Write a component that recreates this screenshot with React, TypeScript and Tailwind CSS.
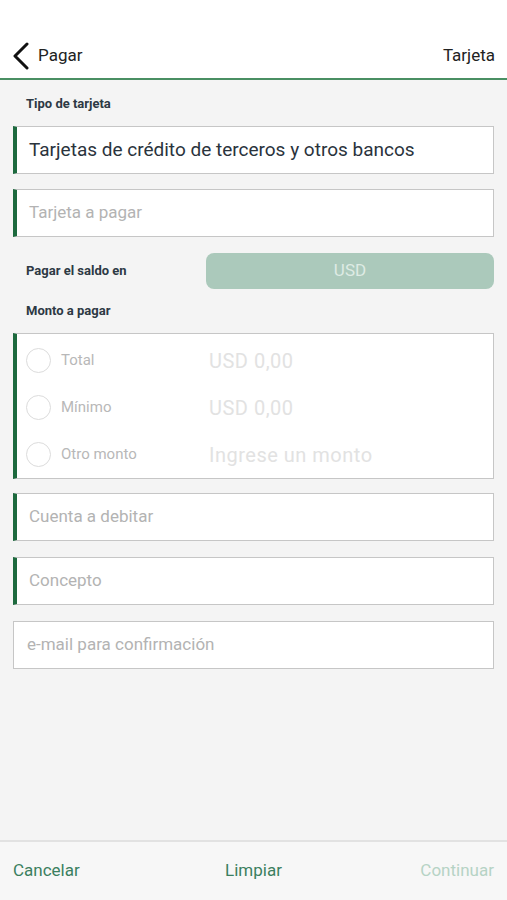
import React from "react";

const font = { fontFamily: "Roboto, 'Noto Sans', sans-serif" };

function Field({ children, bar = true, filled = false }: { children: React.ReactNode; bar?: boolean; filled?: boolean }) {
  return (
    <div
      className={`h-[48px] bg-white border border-[#c6c6c6] flex items-center ${bar ? "border-l-[4px] border-l-[#1d6a3e] pl-[12px]" : "pl-[13px]"} ${filled ? "text-[19px] text-[#2a333c]" : "text-[17px] text-[#b3b3b3]"}`}
    >
      {children}
    </div>
  );
}

function RadioRow({ label, value }: { label: string; value: string }) {
  return (
    <div className="h-[47px] flex items-center">
      <div className="w-[25px] h-[25px] rounded-full border-[1.5px] border-[#dcdcdc] ml-[9px] shrink-0" />
      <div className="ml-[10px] w-[148px] text-[15px] text-[#b8b8b8]">{label}</div>
      <div className="text-[20px] text-[#e2e2e2] tracking-[0.5px]">{value}</div>
    </div>
  );
}

export default function App() {
  return (
    <div className="min-h-[900px] h-[900px] flex flex-col bg-[#f4f4f4]" style={font}>
      <div className="h-[80px] bg-white border-b-2 border-[#4a8f63] flex items-center px-[12px] pt-[34px] shrink-0">
        <svg width="18" height="28" viewBox="0 0 18 28" className="shrink-0">
          <path d="M15 2 L3 14 L15 26" fill="none" stroke="#111" strokeWidth="3" strokeLinecap="round" strokeLinejoin="round" />
        </svg>
        <span className="ml-[8px] text-[17px] text-[#222]">Pagar</span>
        <span className="ml-auto text-[17px] text-[#222]">Tarjeta</span>
      </div>

      <div className="px-[13px] flex flex-col">
        <div className="mt-[16px] ml-[13px] text-[13px] leading-[16px] font-bold text-[#2d3944]">Tipo de tarjeta</div>
        <div className="mt-[14px]">
          <Field filled>Tarjetas de crédito de terceros y otros bancos</Field>
        </div>
        <div className="mt-[15px]">
          <Field>Tarjeta a pagar</Field>
        </div>

        <div className="mt-[16px] flex items-center">
          <div className="ml-[13px] w-[180px] text-[13px] font-bold text-[#2d3944]">Pagar el saldo en</div>
          <div className="flex-1 h-[36px] rounded-[8px] bg-[#abc9bb] flex items-center justify-center text-[17px] text-[#deebe4]">USD</div>
        </div>

        <div className="mt-[14px] ml-[13px] text-[13px] leading-[16px] font-bold text-[#2d3944]">Monto a pagar</div>
        <div className="mt-[14px] bg-white border border-[#c6c6c6] border-l-[4px] border-l-[#1d6a3e] pt-[3px]">
          <RadioRow label="Total" value="USD 0,00" />
          <RadioRow label="Mínimo" value="USD 0,00" />
          <RadioRow label="Otro monto" value="Ingrese un monto" />
        </div>

        <div className="mt-[14px]">
          <Field>Cuenta a debitar</Field>
        </div>
        <div className="mt-[16px]">
          <Field>Concepto</Field>
        </div>
        <div className="mt-[16px]">
          <Field bar={false}>e-mail para confirmación</Field>
        </div>
      </div>

      <div className="mt-auto h-[60px] shrink-0 bg-[#f7f7f7] border-t-2 border-[#e2e2e2] flex items-center px-[13px] text-[17px]">
        <span className="flex-1 text-[#3b7f60]">Cancelar</span>
        <span className="flex-1 text-center text-[#3b7f60]">Limpiar</span>
        <span className="flex-1 text-right text-[#b6d3c5]">Continuar</span>
      </div>
    </div>
  );
}
